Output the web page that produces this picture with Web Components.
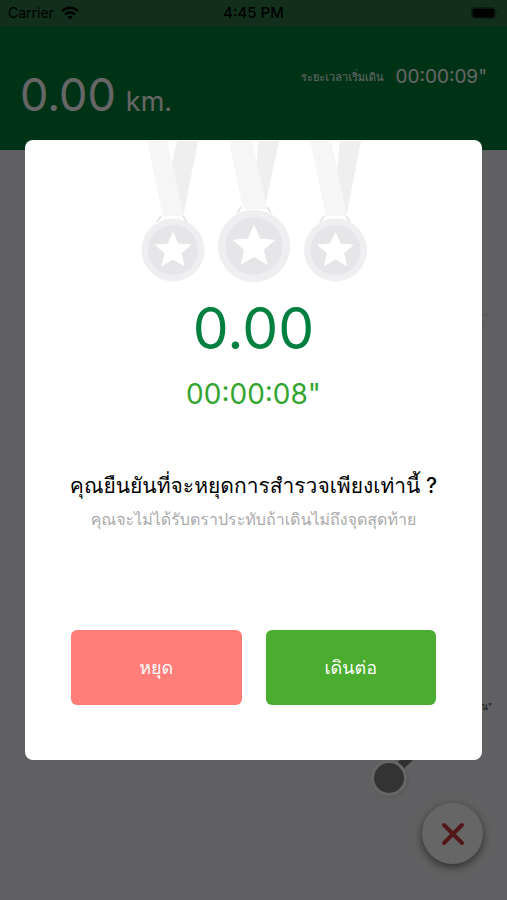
<!DOCTYPE html>
<html lang="th">
<head>
<meta charset="utf-8">
<meta name="viewport" content="width=device-width, initial-scale=1">
<title>ระยะเวลาเริ่มเดิน</title>
<style>
html, body { margin: 0; height: 100%; }
body { font-family: Inter, Thonburi, Loma, Garuda, Waree, Umpush, "Noto Sans Thai Looped", sans-serif; }
</style>
</head>
<body>
<walk-app></walk-app>
<script>
const define = (name, html) => customElements.define(name, class extends HTMLElement {
  constructor() {
    super();
    const root = this.attachShadow({ mode: "open" });
    const template = document.createElement("template");
    template.innerHTML = html;
    root.append(template.content.cloneNode(true));
  }
});

define("status-bar", `
<style>
:host { display: grid; grid-template-columns: 1fr auto 1fr; align-items: center; height: 26px; padding: 0 8px; background: #2b7542; color: #000; font-size: 14px; line-height: 26px; box-sizing: border-box; }
.left { display: flex; align-items: center; gap: 7px; }
.time { font-weight: 500; font-size: 15px; }
.right { display: flex; justify-content: flex-end; }
svg { display: block; }
</style>
<div class="left"><span>Carrier</span>
<svg width="18" height="14" viewBox="0 0 18 14" fill="none" stroke="#000" stroke-width="2.6" aria-hidden="true"><path d="M1 5.2C5.5.6 12.500.6 17 5.2"/><path d="M4 8.500C6.900 5.600 11.100 5.600 14 8.500"/><path d="M9 13.600 6.400 10.800Q9 8.700 11.600 10.800Z" fill="#000" stroke="none"/></svg></div>
<span class="time">4:45 PM</span>
<div class="right"><svg width="28" height="12" viewBox="0 0 28 12" aria-hidden="true"><rect x=".5" y=".5" width="24" height="11" rx="3" fill="none" stroke="#000" stroke-opacity=".35"/><rect x="1.500" y="1.500" width="22" height="9" rx="2"/><path d="M26 4v4q1.500-.5 1.500-2T26 4" opacity=".4"/></svg></div>`);

define("walk-header", `
<style>
:host { display: flex; justify-content: space-between; height: 124px; padding: 0 20px; background: #008038; color: #fff; box-sizing: border-box; }
.distance { display: flex; align-items: baseline; gap: 10px; padding-top: 41px; height: 56px; line-height: 56px; font-size: 45px; }
.unit { font-size: 27px; }
.elapsed { display: flex; align-items: center; gap: 12px; padding-top: 37px; height: 28px; line-height: 28px; font-size: 19px; }
.label { font-size: 11px; }
.distance, .elapsed { white-space: nowrap; }
</style>
<div class="distance"><span>0.00</span><span class="unit">km.</span></div>
<div class="elapsed"><span class="label">ระยะเวลาเริ่มเดิน</span><span>00:00:09"</span></div>`);

define("route-map", `
<style>
:host { display: block; position: relative; flex: 1; background: #f1f1f4; overflow: hidden; }
.pin { position: absolute; right: 89px; bottom: 100px; }
.note { position: absolute; right: 15px; bottom: 187px; font-size: 9px; line-height: 12px; color: #333; }
.shape { position: absolute; right: 16px; bottom: 566px; }
button { position: absolute; right: 24px; bottom: 36px; width: 61px; height: 61px; padding: 0; border: 0; border-radius: 50%; background: #fff; box-shadow: 0 3px 8px #0008; display: grid; place-items: center; }
svg { display: block; }
</style>
<svg class="shape" width="12" height="22" viewBox="0 0 12 22" aria-hidden="true"><path d="M1 3h8M1 6q6 5 0 12" fill="none" stroke="#e2e2e5" stroke-width="3"/></svg>
<span class="note">ณ"</span>
<svg class="pin" width="48" height="50" viewBox="0 0 48 50" aria-hidden="true"><path d="M29 17 43 4" stroke="#777" stroke-width="9"/><circle cx="20" cy="29" r="19" fill="#0001"/><circle cx="19" cy="28" r="18" fill="#fff"/><circle cx="19" cy="28" r="15" fill="#808080"/></svg>
<button type="button" aria-label="ปิด"><svg width="24" height="24" viewBox="0 0 24 24" aria-hidden="true"><path d="m3 3 18 18m0-18-18 18" fill="none" stroke="#d0393f" stroke-width="4" stroke-linecap="round"/></svg></button>`);

define("medal-row", `
<style>:host { display: flex; justify-content: center; } svg { display: block; }</style>
<svg width="230" height="144" viewBox="0 0 230 144" aria-hidden="true">
<defs>
<g id="medal">
<circle r="31.500" fill="#efeff1"/><circle r="25" fill="#e6e6e9"/>
<path d="M0-17.500 5-6l12.500 1L8 3.200l3 12.300L0 9l-11 6.500 3-12.300L-17.500-5-5-6Z" fill="#fff" stroke="#fff" stroke-width="1" stroke-linejoin="round"/>
</g>
</defs>
<path d="m38 1h21L45 73H32L29 40Z" fill="#efeff0"/><path d="M8 1h20l17 75H24Z" fill="#f6f6f7"/>
<path d="M119 1h21l-14 66h-11Z" fill="#efeff0"/><path d="M90 1h23l15 68h-24Z" fill="#f6f6f7"/>
<path d="M201 1h21l-14 72h-14Z" fill="#efeff0"/><path d="M171 1h21l16 75h-21Z" fill="#f6f6f7"/>
<g fill="none" stroke="#e5e5e7" stroke-width="2"><path d="m18 82 4-6M48 82l-4-6M98 73l4-6M132 73l-4-6M181 82l4-6M211 82l-4-6"/></g>
<use href="#medal" transform="translate(34 110)"/>
<use href="#medal" transform="translate(115 106)scale(1.150)"/>
<use href="#medal" transform="translate(196.500 110)"/>
</svg>`);

define("action-button", `
<style>
:host { display: block; flex: 1; }
button { width: 100%; height: 75px; border: 0; border-radius: 6px; padding: 0; color: #fff; font: inherit; font-size: 18px; line-height: 28px; background: #4aad30; }
:host([kind="stop"]) button { background: #ff7e79; }
</style>
<button type="button"><slot></slot></button>`);

define("confirm-dialog", `
<style>
:host { position: absolute; inset: 0; display: flex; align-items: center; justify-content: center; background: rgba(0,0,0,.6); padding: 0 25px; }
section { flex: 1; max-width: 560px; background: #fff; border-radius: 8px; padding-bottom: 55px; text-align: center; }
.distance { margin-top: 9px; font-size: 57px; line-height: 72px; color: #00803f; }
.time { margin-top: 9px; font-size: 28px; line-height: 40px; color: #35a532; }
h1 { margin: 54px 0 0; font-size: 21px; line-height: 36px; font-weight: 500; color: #000; white-space: nowrap; }
p { margin: 0; font-size: 16px; line-height: 30px; color: #aaa; white-space: nowrap; }
.actions { display: flex; gap: 24px; padding: 0 46px; margin-top: 96px; }
</style>
<section role="dialog" aria-modal="true" aria-labelledby="title">
<medal-row></medal-row>
<div class="distance">0.00</div>
<div class="time">00:00:08"</div>
<h1 id="title">คุณยืนยันที่จะหยุดการสำรวจเพียงเท่านี้ ?</h1>
<p>คุณจะไม่ได้รับตราประทับถ้าเดินไม่ถึงจุดสุดท้าย</p>
<div class="actions"><action-button kind="stop">หยุด</action-button><action-button>เดินต่อ</action-button></div>
</section>`);

define("walk-app", `
<style>:host { display: flex; flex-direction: column; position: relative; min-height: 100vh; overflow: hidden; }</style>
<status-bar></status-bar>
<walk-header></walk-header>
<route-map></route-map>
<confirm-dialog></confirm-dialog>`);
</script>
</body>
</html>
